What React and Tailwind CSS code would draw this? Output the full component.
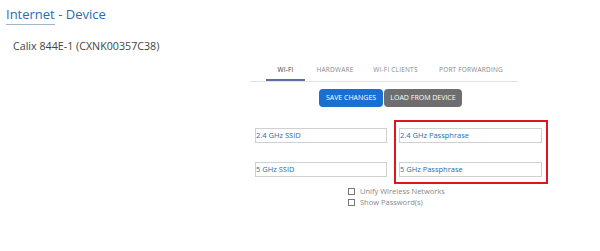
export default function App() {
  const tabs = [
    { label: "WI-FI", w: "w-[39px]", active: true },
    { label: "HARDWARE", w: "w-[60px]" },
    { label: "WI-FI CLIENTS", w: "w-[61px]" },
    { label: "PORT FORWARDING", w: "w-[90px]" },
  ];

  return (
    <div className="w-[600px] h-[251px] bg-white overflow-hidden font-['Open_Sans',sans-serif]">
      <div className="pl-[6px] pt-[4px]">
        <h1 className="text-[13px] leading-[20px] text-[#2b6cb0] font-normal">
          <span className="border-b border-[#9fb6cc] pb-[1px]">Internet</span> - Device
        </h1>
      </div>
      <div className="pl-[13px] pt-[14px] text-[10.7px] leading-[16px] text-[#444]">
        Calix 844E-1 (CXNK00357C38)
      </div>

      <div className="ml-[250px] w-[268px] mt-[11px] border-b border-[#e2e2e2] flex text-[6.5px] text-[#888] tracking-[0.2px] pl-[16px]">
        {tabs.map((t) => (
          <div
            key={t.label}
            className={
              t.active
                ? `${t.w} text-center pb-[4px] text-[#333] border-b-2 border-[#5b6fa8]`
                : `${t.w} text-center pb-[4px]`
            }
          >
            {t.label}
          </div>
        ))}
      </div>

      <div className="flex ml-[319px] w-fit gap-[1px] mt-[7px]">
        <button className="h-[18px] w-[64px] rounded-[4px] bg-[#1b6fd0] text-white text-[7px]">
          SAVE CHANGES
        </button>
        <button className="h-[18px] w-[78px] rounded-[4px] bg-[#6e6e6e] text-white text-[7px]">
          LOAD FROM DEVICE
        </button>
      </div>

      <div className="ml-[255px] mt-[13px] flex gap-[7px]">
        <div className="flex flex-col gap-[19px] pt-[8px]">
          <div className="w-[132px] h-[15px] border border-[#d0d0d0] text-[7.5px] leading-[13px] text-[#2b6cb0]">2.4 GHz SSID</div>
          <div className="w-[132px] h-[15px] border border-[#d0d0d0] text-[7.5px] leading-[13px] text-[#2b6cb0]">5 GHz SSID</div>
        </div>
        <div className="w-[154px] h-[64px] border-2 border-[#e0151e] pl-[3px] pt-[6px] flex flex-col gap-[19px]">
          <div className="w-[143px] h-[15px] border border-[#d0d0d0] text-[7.5px] leading-[13px] text-[#2b6cb0]">2.4 GHz Passphrase</div>
          <div className="w-[143px] h-[15px] border border-[#d0d0d0] text-[7.5px] leading-[13px] text-[#2b6cb0]">5 GHz Passphrase</div>
        </div>
      </div>

      <div className="ml-[348px] mt-[3px] flex flex-col gap-[2px] text-[7.5px] leading-[9px] text-[#888]">
        <label className="flex items-center gap-[5px]">
          <span className="w-[7px] h-[7px] border border-[#777]" />
          Unify Wireless Networks
        </label>
        <label className="flex items-center gap-[5px]">
          <span className="w-[7px] h-[7px] border border-[#777]" />
          Show Password(s)
        </label>
      </div>
    </div>
  );
}
